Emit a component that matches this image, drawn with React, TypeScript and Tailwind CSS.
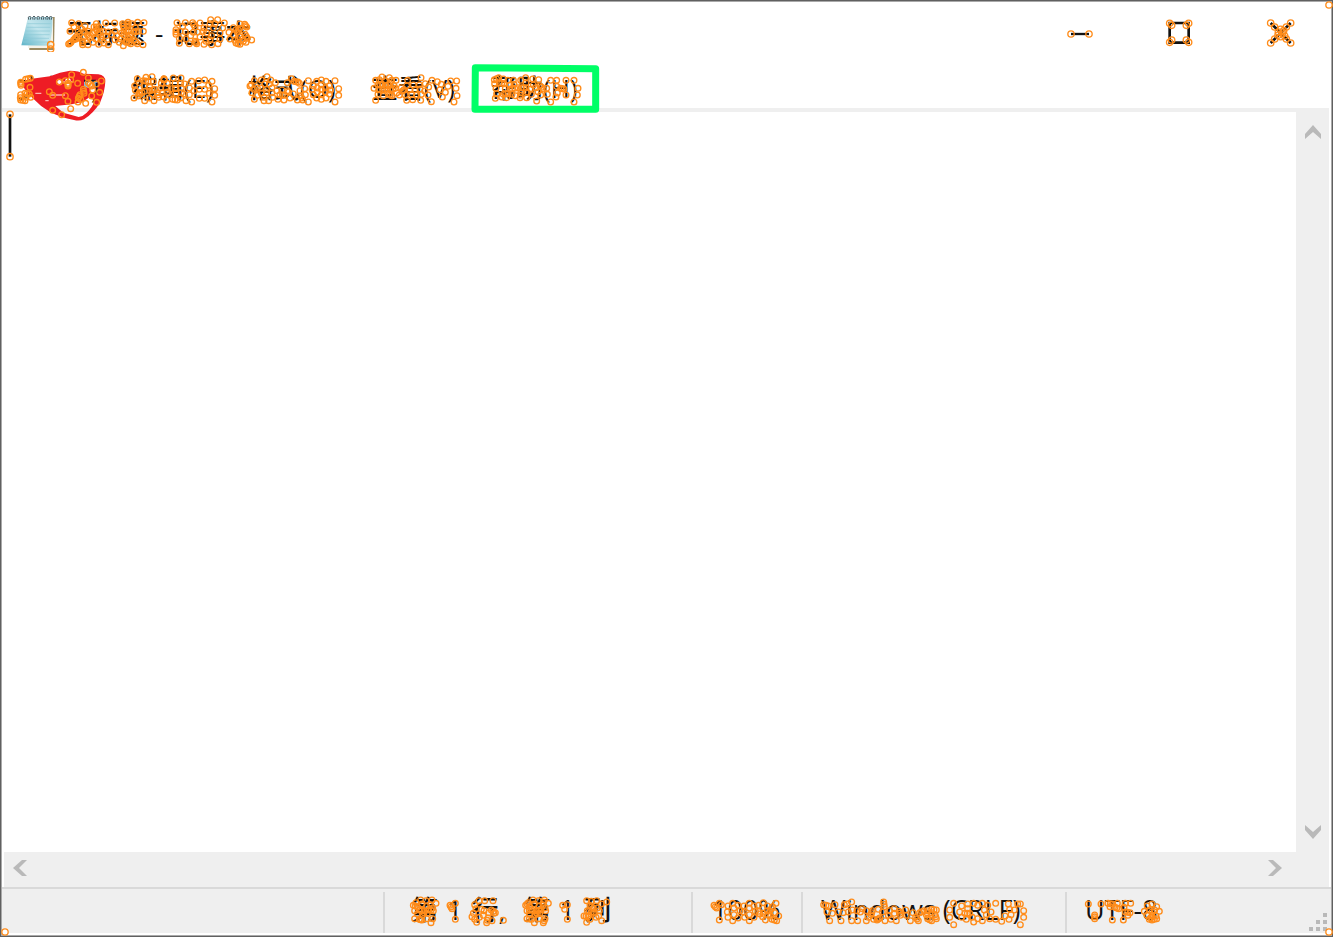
import React from "react";

type MarksProps = { x: number; y: number; points: string };

/* Anchor-point rings, drawn on a grid of three units to the pixel.
   Close neighbours get one more ring halfway between them. */
function Marks({ x, y, points }: MarksProps) {
  const rings: number[][] = [];
  points
    .trim()
    .split(/\s+/)
    .map((p) => p.split(",").map(Number))
    .forEach((p, i, all) => {
      rings.push(p);
      const next = all[i + 1];
      if (next && i % 2 === 0 && Math.hypot(next[0] - p[0], next[1] - p[1]) < 15) {
        rings.push([(p[0] + next[0]) / 2, (p[1] + next[1]) / 2]);
      }
    });
  return (
    <svg
      aria-hidden="true"
      className="pointer-events-none absolute top-0 left-0 z-20 h-9 w-60 overflow-visible"
      viewBox={`${x} ${y} 720 108`}
      fill="none"
      stroke="#ff8c1a"
      strokeWidth="4"
    >
      {rings.map(([cx, cy], i) => (
        <circle key={i} cx={cx} cy={cy} r="8.5" />
      ))}
    </svg>
  );
}

function Label({ children, ...marks }: MarksProps & { children: React.ReactNode }) {
  return (
    <span className="relative block h-9 leading-8 whitespace-pre">
      {children}
      <Marks {...marks} />
    </span>
  );
}

const titlePoints = `215,69 236,72 210,95 235,94 255,78 222,82 245,87 265,95 206,133 213,128 221,120 230,110 240,102 252,112 262,105 270,115 247,124 248,135 264,135 228,118 253,97
289,72 282,82 296,82 290,92 278,100 296,104 288,118 279,128 296,134 303,112 317,70 344,70 310,95 325,97 345,95 306,122 325,135 318,108 335,104 300,98 312,130
368,72 372,85 384,68 384,80 372,95 385,92 395,72 406,84 413,68 432,69 402,96 415,95 430,95 351,108 362,118 372,105 384,112 395,105 358,128 370,138 382,125 392,132 403,122 412,132 429,135 345,120 365,100 390,118 378,128
531,69 528,90 528,104 540,95 538,116 538,131 556,69 578,69 585,82 556,96 580,98 558,118 568,132 585,125 590,132 572,108 548,80
600,70 632,60 653,60 612,85 630,72 645,72 673,70 610,95 640,85 668,85 600,112 620,100 635,108 660,100 612,134 630,120 635,135 654,132 660,118 592,97 618,125
687,98 700,84 720,73 740,82 734,74 720,86 712,98 700,105 690,118 705,122 720,112 735,104 742,116 755,121 730,125 720,134 708,130 738,128 715,120 728,118 708,90`;

const filePoints = `77,58 91,55 62,67 63,76 90,82 62,104 75,100 88,102 62,120 75,122 92,112 61,113 78,112 178,66 196,62 212,60 204,70 204,78 233,70 215,44 250,37 265,54 265,68 275,78 304,63 148,95 158,106 196,107 204,124 212,146 235,115 240,104 252,100 250,88 278,90 299,97 290,127 257,130 234,126 158,151 185,164 275,108 289,72 242,118`;

const editPoints = `52,56 44,78 58,68 46,90 58,98 42,114 55,108 66,98 78,52 96,50 70,62 84,64 100,64 72,78 90,82 74,94 90,92 104,88 74,122 88,114 102,122 96,102 112,98 116,112 132,56 132,60 124,70 142,70 122,84 138,84 126,98 142,96 130,110 148,104 140,120 154,86 160,54 183,54 165,70 182,70 165,86 184,84 168,100 184,98 158,118 172,120 182,114 194,72 198,122 192,102 215,64 208,84 208,104 215,126 222,92 236,62 254,60 238,88 254,88 238,115 254,115 276,64 284,86 284,106 276,126 266,76 268,100`;

const formatPoints = `403,62 394,75 390,78 402,88 412,84 396,98 403,118 412,106 424,60 441,50 452,60 434,72 448,72 422,84 440,88 456,84 424,100 440,98 456,98 432,122 446,122 432,112 458,112 466,68 502,68 515,56 522,64 534,66 538,70 470,92 486,90 502,92 480,104 494,106 474,118 492,120 510,114 506,96 520,102 532,120 542,108 548,120 565,62 554,86 556,104 565,126 540,92 604,60 590,64 618,64 580,78 628,78 576,88 632,90 580,104 628,102 590,114 618,114 604,118 604,74 592,84 616,84 592,96 616,96 604,104 604,88 645,62 656,86 656,106 645,126`;

const viewPoints = `47,76 66,66 88,68 108,76 58,74 76,78 95,76 42,100 54,90 66,88 78,92 90,86 102,92 56,104 68,104 80,102 92,104 106,100 54,118 70,122 86,118 96,122 47,136 110,114 124,98 118,120 128,108 143,76 183,68 132,104 140,92 160,90 178,90 136,120 150,104 165,104 180,102 140,136 155,118 170,120 184,118 182,136 158,134 196,86 194,108 216,76 206,96 204,120 214,140 232,80 244,88 240,104 247,126 256,112 264,94 272,78 290,78 288,100 291,122 282,141`;

const helpPoints = `403,74 416,68 430,72 404,86 418,84 432,86 408,100 406,130 410,116 444,76 460,76 450,90 462,88 436,100 450,102 464,100 430,118 444,116 456,118 440,128 466,122 425,126 474,98 482,76 497,68 498,84 484,98 498,98 482,114 480,128 500,128 502,112 512,102 518,72 520,90 514,118 536,74 528,98 540,92 550,102 534,110 530,138 542,120 562,118 572,76 560,100 572,141 590,76 590,94 592,114 588,126 618,76 602,100 612,102 618,120 642,76 654,100 652,120 642,141`;

const positionPoints = `122,60 108,68 100,76 112,80 126,72 138,62 140,78 156,60 152,74 168,70 158,84 104,92 118,90 132,92 146,90 160,92 112,102 128,104 142,100 104,116 118,118 126,120 140,116 153,128 158,116 132,98
210,76 216,86 226,70 226,118
297,62 284,74 288,86 280,100 276,110 290,127 284,118 314,62 339,62 312,92 334,90 346,98 304,88 310,106 324,114 320,128 336,122 298,112 326,98 342,100 370,121
459,60 445,68 437,76 449,80 463,72 475,62 477,78 493,60 489,74 505,70 495,84 441,92 455,90 469,92 483,90 497,92 449,102 465,104 479,100 441,116 455,118 463,128 477,116 490,128 495,116 469,98
548,76 554,88 562,74 562,118
620,62 634,64 650,62 664,72 680,66 630,76 640,84 622,92 634,96 612,108 624,110 640,100 620,127 630,118 652,84 658,92 648,112 665,122 656,108`;

const zoomPoints = `102,76 110,84 118,70 118,120 124,74 144,78 158,70 174,76 142,96 144,112 158,122 174,114 180,92 162,84 162,104 192,78 208,70 222,78 190,96 194,112 208,122 222,112 226,94 208,84 208,104 236,76 250,68 262,78 236,94 250,100 262,92 288,70 278,80 270,92 264,104 256,120 276,118 290,122 296,108 284,98 272,108 248,110 240,102`;

const lineEndPoints = `428,74 442,78 462,74 438,96 446,122 454,100 472,96 480,122 490,74 486,98 502,96 498,72 512,66 514,90 512,122 530,122 528,92 544,86 556,92 562,112 556,122 538,96 574,92 570,104 578,118 592,88 608,66 610,80 604,96 612,122 596,114 588,120 626,92 640,86 654,94 658,106 646,122 630,118 622,106 640,100 674,90 676,106 688,122 696,98 704,112 712,122 716,98 728,92 740,92 736,104 752,88 766,90 762,104 766,116 752,122 740,116 752,98
818,70 806,90 806,112 818,134 842,78 836,96 842,112 860,72 878,70 890,76 860,86 852,100 866,100 856,118 878,126 890,116 874,112 904,70 920,76 910,90 904,122 916,104 930,96 926,116 944,70 944,118 962,124 972,108 984,118 982,72 986,88 1000,90 1010,72 1018,72 990,104 1028,92 1028,112 1018,134`;

const encodingPoints = `145,282 183,282 164,315 164,326 204,280 218,282 232,280 210,290 225,292 236,296 217,330 256,280 272,280 252,292 256,306 270,308 250,330 264,316 322,288 336,282 350,290 328,300 344,300 313,304 336,306 358,304 322,316 348,318 336,318 328,328 350,326 336,330`;

function NotepadIcon() {
  return (
    <svg aria-hidden="true" className="h-[38px] w-9 shrink-0" viewBox="60 43 108 114">
      <defs>
        <linearGradient id="sheet" x1="1" y1="0" x2="0" y2="1">
          <stop offset="0" stopColor="#9bd0dc" />
          <stop offset="0.45" stopColor="#c3e6ed" />
          <stop offset="1" stopColor="#5fb4c8" />
        </linearGradient>
      </defs>
      <path d="M92 52H164L162 151H88V140Z" fill="#9c8b62" />
      <path d="M92 54H159V145H84Z" fill="#f5f2e8" />
      <path d="M84 52H157Q159 95 148 138L64 137Q76 90 84 52Z" fill="url(#sheet)" />
      <path
        d="M82 72H152M80 83H151M78 94H150M75 105H149M72 116H147M69 127H145"
        stroke="#8cc9d6"
        strokeWidth="2"
      />
      <path
        d="M86 60q-3-9 3-11q6 2 2 11M99 60q-3-9 3-11q6 2 2 11M112 60q-3-9 3-11q6 2 2 11M125 60q-3-9 3-11q6 2 2 11M138 60q-3-9 3-11q6 2 2 11M149 60q-3-9 3-11q6 2 2 11"
        fill="none"
        stroke="#4b5960"
        strokeWidth="3"
      />
      <g fill="none" stroke="#ff8c1a" strokeWidth="4">
        <circle cx="152" cy="135" r="9.5" />
        <circle cx="152" cy="148" r="9.5" />
      </g>
    </svg>
  );
}

function RedScribble() {
  return (
    <svg
      aria-hidden="true"
      className="pointer-events-none absolute top-0 left-0 z-10 h-9 w-60 overflow-visible"
      viewBox="54 36 720 108"
    >
      <path
        fillRule="evenodd"
        fill="#ee1c25"
        d="M68 76Q70 60 90 57L150 49Q180 35 210 32Q238 32 250 41L295 43Q316 46 316 64Q315 95 300 128Q280 160 252 178Q238 184 222 180Q180 172 150 156Q122 140 100 116Q78 98 68 76ZM166 138L190 158L236 171Q248 170 260 158Q278 140 284 122L268 112L248 126L215 133Z"
      />
      <path d="M106 100H124M136 122H146M170 66H220M150 105H195" stroke="#ffb3b0" strokeWidth="4" />
      <path d="M252 62H292V82H252Z" fill="#7dbde5" />
      <path d="M252 62H288M290 68V100" stroke="#141425" strokeWidth="6" />
      <g fill="#fff">
        <circle cx="269" cy="75" r="9" />
        <circle cx="178" cy="66" r="6" />
        <circle cx="204" cy="62" r="8" />
        <circle cx="204" cy="76" r="6" />
        <circle cx="278" cy="90" r="8" />
      </g>
    </svg>
  );
}

function WindowButton({ label, children }: { label: string; children: React.ReactNode }) {
  return (
    <button type="button" aria-label={label} className="flex w-[100px] items-center justify-center">
      <svg className="h-[30px] w-[30px]" viewBox="0 0 90 90" fill="none">
        {children}
      </svg>
    </button>
  );
}

function ScrollButton({ label, d }: { label: string; d: string }) {
  return (
    <button type="button" aria-label={label} className="flex items-center justify-center px-[7px] py-2.5">
      <svg className="h-[18px] w-[18px]" viewBox="0 0 18 18" fill="#b9b9b9">
        <path d={d} />
      </svg>
    </button>
  );
}

function CornerMark({ className }: { className: string }) {
  return (
    <svg aria-hidden="true" className={`pointer-events-none absolute z-30 h-2 w-2 ${className}`} viewBox="0 0 24 24">
      <circle cx="12" cy="12" r="9.5" fill="#fff" stroke="#ff8c1a" strokeWidth="4" />
    </svg>
  );
}

export default function App() {
  return (
    <div className="relative flex min-h-screen border border-[#606060] bg-white font-['Open_Sans','Noto_Sans_CJK_SC',sans-serif] text-[26px] font-medium text-[#111]">
      <CornerMark className="top-0 left-0" />
      <CornerMark className="top-0 -right-px" />
      <CornerMark className="bottom-0 left-0" />
      <CornerMark className="-right-px bottom-0" />
      <div className="flex grow flex-col border border-[#a9a9a9]">
        <header className="flex h-[62px] shrink-0 justify-between">
          <div className="flex items-center gap-[11px] pl-[18px]">
            <NotepadIcon />
            <h1>
              <Label x={201} y={46} points={titlePoints}>
                <span className="flex gap-2.5 pt-0.5">
                  <span>无标题</span>
                  <span>-</span>
                  <span>记事本</span>
                </span>
              </Label>
            </h1>
          </div>
          <div className="flex pr-px">
            <WindowButton label="最小化">
              <path d="M18 48H72" stroke="#111" strokeWidth="7" />
              <g stroke="#ff8c1a" strokeWidth="4">
                <circle cx="18" cy="48" r="9.5" />
                <circle cx="72" cy="48" r="9.5" />
              </g>
            </WindowButton>
            <WindowButton label="最大化">
              <path d="M14 15H71V74H14Z" stroke="#111" strokeWidth="8" />
              <g stroke="#ff8c1a" strokeWidth="4">
                {[[14, 16], [20, 22], [71, 16], [64, 22], [14, 73], [20, 66], [71, 73], [64, 66]].map(([cx, cy]) => (
                  <circle key={`${cx}-${cy}`} cx={cx} cy={cy} r="9.5" />
                ))}
              </g>
            </WindowButton>
            <WindowButton label="关闭">
              <path d="M17 15L77 75M77 15L17 75" stroke="#111" strokeWidth="8" />
              <g stroke="#ff8c1a" strokeWidth="4">
                {[[17, 15], [77, 15], [17, 75], [77, 75], [29, 27], [64, 27], [29, 63], [64, 63], [47, 34], [56, 38], [40, 42], [52, 45], [47, 56], [59, 54], [39, 52]].map(([cx, cy]) => (
                  <circle key={`${cx}-${cy}`} cx={cx} cy={cy} r="9.5" />
                ))}
              </g>
            </WindowButton>
          </div>
        </header>

        <nav aria-label="菜单" className="flex h-11 shrink-0 items-start gap-[31px] pt-2 pl-4">
          <button type="button" className="relative w-[83px] text-left">
            <Label x={54} y={36} points={filePoints}>文件(F)</Label>
            <RedScribble />
          </button>
          <button type="button" className="w-[85px] text-left">
            <Label x={36} y={36} points={editPoints}>编辑(E)</Label>
          </button>
          <button type="button" className="w-[93px] text-left">
            <Label x={384} y={36} points={formatPoints}>格式(O)</Label>
          </button>
          <button type="button" className="w-[88px] text-left">
            <Label x={36} y={51} points={viewPoints}>查看(V)</Label>
          </button>
          <button type="button" className="relative w-[89px] text-left">
            <svg
              aria-hidden="true"
              className="pointer-events-none absolute top-0 left-0 z-10 h-9 w-60 overflow-visible"
              viewBox="393 51 720 108"
            >
              <path
                d="M346 38L707 41V163H345Z"
                fill="none"
                stroke="#00ff66"
                strokeWidth="21"
                strokeLinejoin="round"
              />
            </svg>
            <Label x={393} y={51} points={helpPoints}>帮助(H)</Label>
          </button>
        </nav>

        <main className="mr-0.5 flex grow flex-col border-t-4 border-[#efefef]">
          <div className="flex grow">
            <div className="relative flex grow">
              <textarea aria-label="文本编辑器" className="grow resize-none px-2 outline-none" />
              <svg aria-hidden="true" className="pointer-events-none absolute top-0 left-1 h-12 w-2 overflow-visible" viewBox="0 0 24 144" fill="none">
                <path d="M12 7V134" stroke="#111" strokeWidth="8" />
                <g stroke="#ff8c1a" strokeWidth="4">
                  <circle cx="12" cy="7" r="9.5" />
                  <circle cx="12" cy="134" r="9.5" />
                </g>
              </svg>
            </div>
            <div className="flex w-[33px] flex-col justify-between bg-[#efefef]">
              <ScrollButton label="向上滚动" d="M1 12L9 3L17 12V17L9 10L1 17Z" />
              <ScrollButton label="向下滚动" d="M1 1L9 8L17 1V6L9 15L1 6Z" />
            </div>
          </div>
          <div className="ml-0.5 flex h-[35px] shrink-0 items-center justify-between bg-[#efefef] pr-[38px] pb-[3px]">
            <ScrollButton label="向左滚动" d="M11 1L2 9L11 17H16L8 9L16 1Z" />
            <ScrollButton label="向右滚动" d="M7 1L16 9L7 17H2L10 9L2 1Z" />
          </div>
        </main>

        <footer className="relative mb-0.5 flex h-[46px] shrink-0 border-t-2 border-[#d9d9d9] bg-[#efefef] pt-[3px] text-[27px]">
          <div className="grow" />
          <div className="w-[308px] border-l-2 border-[#d9d9d9] pt-0.5 pl-[26px]">
            <Label x={93} y={42} points={positionPoints}>
              <span className="flex gap-[18px]">
                <span className="flex gap-[9px]">
                  <span>第</span>
                  <span>1</span>
                  <span>行,</span>
                </span>
                <span className="flex gap-[9px]">
                  <span>第</span>
                  <span>1</span>
                  <span>列</span>
                </span>
              </span>
            </Label>
          </div>
          <div className="w-[110px] border-l-2 border-[#d9d9d9] pt-0.5 pl-[19px]">
            <Label x={96} y={42} points={zoomPoints}>100%</Label>
          </div>
          <div className="w-[264px] border-l-2 border-[#d9d9d9] pt-0.5 pl-[18px]">
            <Label x={420} y={42} points={lineEndPoints}>Windows (CRLF)</Label>
          </div>
          <div className="w-[266px] border-l-2 border-[#d9d9d9] pt-0.5 pl-[18px]">
            <Label x={135} y={252} points={encodingPoints}>UTF-8</Label>
          </div>
          <svg aria-hidden="true" className="absolute right-1 bottom-0.5 h-[18px] w-[18px]" viewBox="0 0 18 18" fill="#b9b9b9">
            <path d="M14 0h4v4h-4zM7 7h4v4h-4zM14 7h4v4h-4zM0 14h4v4h-4zM7 14h4v4h-4zM14 14h4v4h-4z" />
          </svg>
        </footer>
      </div>
    </div>
  );
}
